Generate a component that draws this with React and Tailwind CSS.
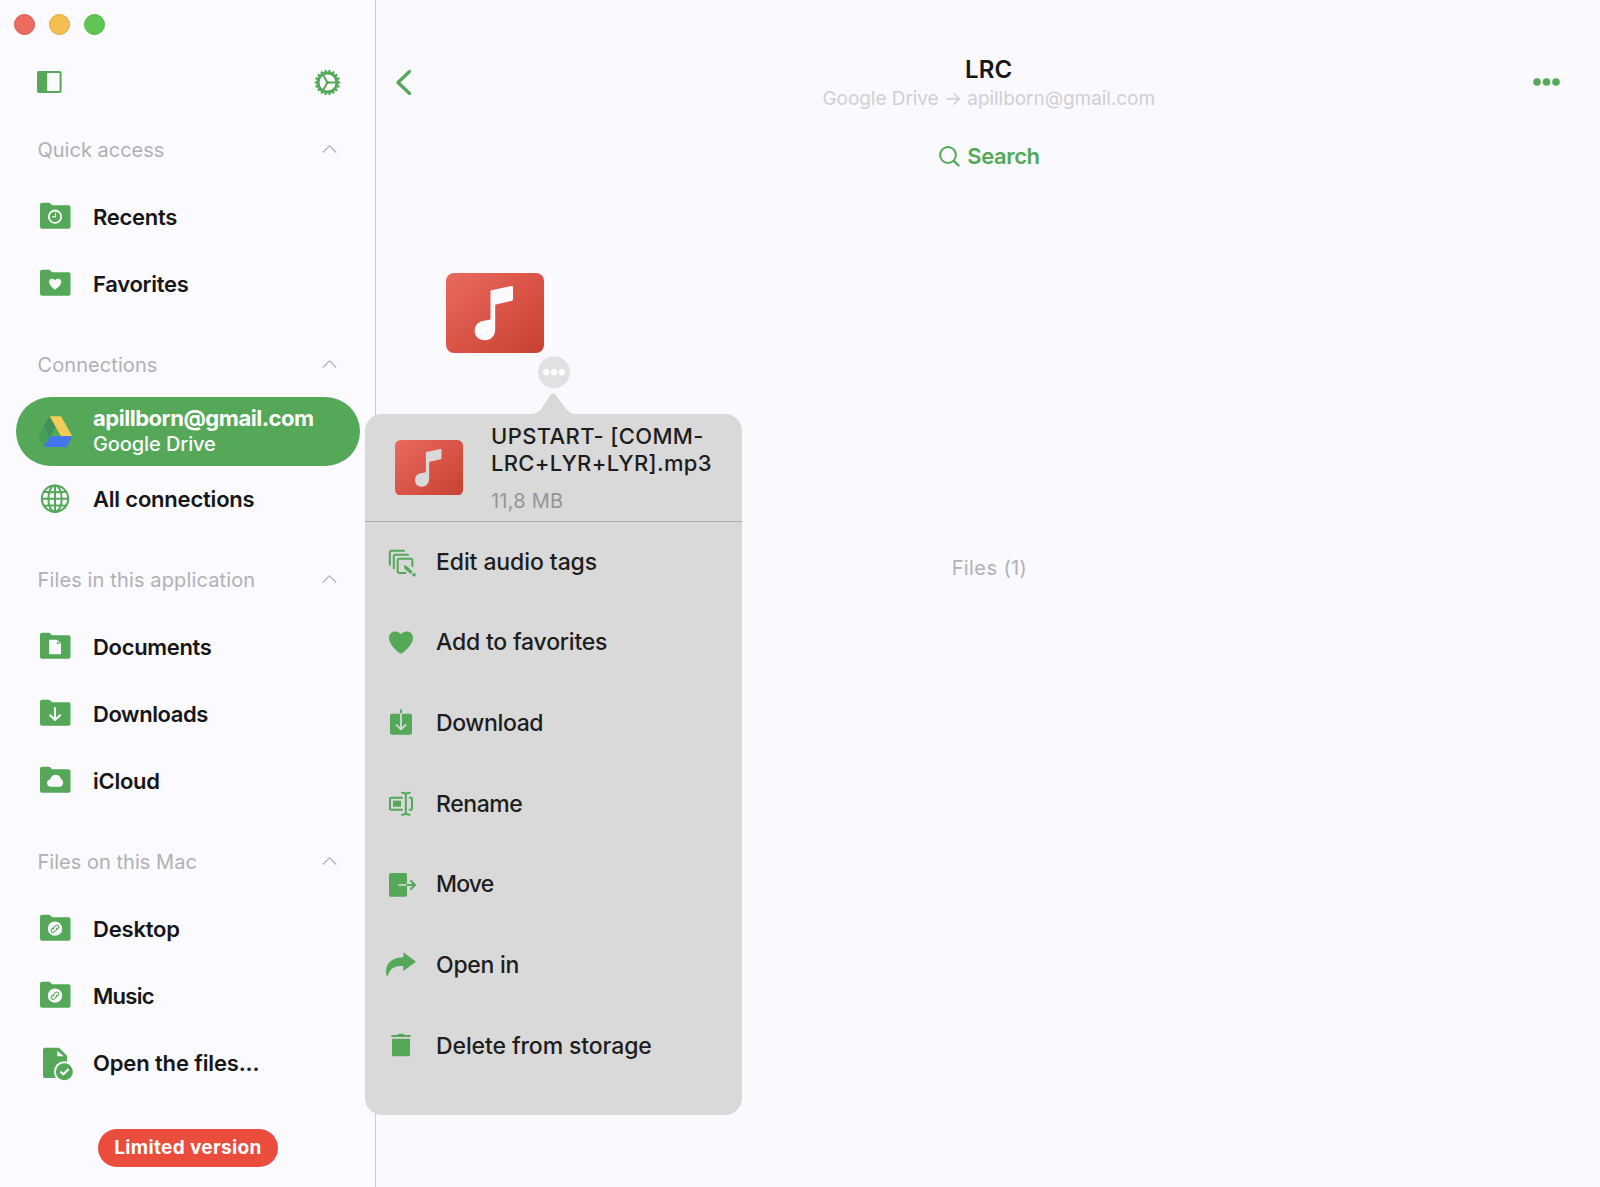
import React, { useId } from "react";

const GREEN = "#54a858";

/* ---------- sidebar icons (shared 108-unit canvas, vertically centred on 0) ---------- */

function SideIcon({ children }) {
  return (
    <svg className="h-9 w-9 shrink-0" viewBox="114 -54 108 108" fill="none">
      {children}
    </svg>
  );
}

function Folder({ children }) {
  return (
    <SideIcon>
      <path d="M120 -37q0 -6 6 -6h20q3 0 4.500 2l4 4.500q1 1 3 1h48q6 0 6 6V29q0 6 -6 6h-79.500q-6 0 -6 -6z" fill={GREEN} />
      {children}
    </SideIcon>
  );
}

const RecentsIcon = () => (
  <Folder>
    <circle cx="165" cy="-1" r="18.500" stroke="#fafaff" strokeWidth="5.500" />
    <path d="M166.500 -12V-0.500H157" stroke="#fafaff" strokeWidth="3.500" strokeLinecap="round" strokeLinejoin="round" />
  </Folder>
);

const FavoritesIcon = () => (
  <Folder>
    <path
      d="M165 17C154 9 147 2 147 -6.500C147 -12 151 -15.500 156 -15.500C160 -15.500 163.500 -13.500 165 -10C166.500 -13.500 170 -15.500 174.500 -15.500C180 -15.500 184 -12 184 -6.500C184 2 176 9 165 17Z"
      fill="#fafaff"
    />
  </Folder>
);

const DocumentsIcon = () => (
  <Folder>
    <path d="M150 -22H171L183 -10V19q0 3 -3 3H150q-3 0 -3 -3V-19q0 -3 3 -3Z" fill="#fafaff" />
    <path d="M171 -17V-9H179Z" fill={GREEN} />
  </Folder>
);

const DownloadsIcon = () => (
  <Folder>
    <path d="M165 -18V17M150.500 4L165 18L180.500 4" stroke="#fafaff" strokeWidth="6" strokeLinecap="round" strokeLinejoin="round" />
  </Folder>
);

const CloudIcon = () => (
  <Folder>
    <path
      d="M153 17C146 17 141 12.500 141 6.500C141 0 146 -4 151 -5C152 -13 159 -19 167 -19C175 -19 181 -14 183 -6C187 -4 189.500 0 189.500 5C189.500 12 185 17 178 17Z"
      fill="#fafaff"
    />
  </Folder>
);

const LinkIcon = () => (
  <Folder>
    <circle cx="165" cy="-1" r="21.500" fill="#fafaff" />
    <g transform="translate(165 -1) rotate(-38)" stroke={GREEN} strokeWidth="3.200" strokeLinecap="round">
      <path d="M-3 -5H-8a5.500 5.500 0 0 0 0 11H-1a5.500 5.500 0 0 0 5 -5" />
      <path d="M3 5H8a5.500 5.500 0 0 0 0 -11H1a5.500 5.500 0 0 0 -5 5" />
    </g>
  </Folder>
);

const OpenFilesIcon = () => (
  <SideIcon>
    <path d="M135 -46H177L201 -22V45H135q-6 0 -6 -6V-40q0 -6 6 -6Z" fill={GREEN} />
    <path d="M172 -37V-20H191Z" fill="#fafaff" />
    <circle cx="193" cy="26" r="31" fill="#fafaff" />
    <circle cx="193" cy="26" r="25.500" fill={GREEN} />
    <path d="M181 26L190 34L206 18" stroke="#fafaff" strokeWidth="6.500" />
  </SideIcon>
);

const GlobeIcon = () => (
  <SideIcon>
    <g stroke={GREEN} strokeWidth="6">
      <circle cx="165" cy="-1" r="39.500" />
      <ellipse cx="165" cy="-1" rx="20" ry="39.500" />
      <path d="M165 -41V39M125 -1H205M131 -22Q165 -19 199 -22M131 20Q165 17 199 20" />
    </g>
  </SideIcon>
);

const DriveIcon = () => (
  <SideIcon>
    <path d="M149 -47L167 -15L132 45L114 13Z" fill="#469f5b" />
    <path d="M149 -47L167 -15L150 13H146L131 -15Z" fill="#3c925a" />
    <path d="M149 -47H183L217 13H183Z" fill="#f3cc58" />
    <path d="M150 13H217L200 45H132Z" fill="#4474ee" />
  </SideIcon>
);

/* ---------- menu icons (90-unit canvas, vertically centred on 0) ---------- */

function MenuIcon({ children }) {
  return (
    <svg className="h-[30px] w-[30px] shrink-0" viewBox="78 -45 90 90" fill="none">
      {children}
    </svg>
  );
}

const EditTagsIcon = () => (
  <MenuIcon>
    <g stroke={GREEN} strokeWidth="6" strokeLinecap="round" strokeLinejoin="round">
      <path d="M89.500 8V-29q0 -5 5 -5H132" />
      <path d="M101.500 19V-17q0 -5 5 -5H144" />
      <path d="M157 12V-5q0 -5 -5 -5H118q-5 0 -5 5V28q0 5 5 5H136" />
    </g>
    <path d="M131 9L140 12L158 29L152 36L134 20Z" fill={GREEN} />
    <circle cx="162" cy="38.500" r="5.500" fill={GREEN} />
  </MenuIcon>
);

const HeartIcon = () => (
  <MenuIcon>
    <path
      d="M123 32C118 32 87 6 87 -15C87 -27 95 -34.500 105 -34.500C113 -34.500 119.500 -31 123 -26C126.500 -31 133 -34.500 141 -34.500C151 -34.500 159 -27 159 -15C159 6 128 32 123 32Z"
      fill={GREEN}
    />
  </MenuIcon>
);

const DownloadIcon = () => (
  <MenuIcon>
    <rect x="90" y="-28" width="66" height="63" rx="5" fill={GREEN} />
    <path d="M123 -38V-28" stroke={GREEN} strokeWidth="6" strokeLinecap="round" />
    <path d="M123 -28V17M109.500 6L123 19L137 6" stroke="#d9dcd9" strokeWidth="5.200" strokeLinecap="round" strokeLinejoin="round" />
  </MenuIcon>
);

const RenameIcon = () => (
  <MenuIcon>
    <g stroke={GREEN} strokeWidth="6" strokeLinecap="round" strokeLinejoin="round">
      <path d="M126 -19H93q-3 0 -3 3V14q0 3 3 3H126" />
      <path d="M149 -19H153q3 0 3 3V14q0 3 -3 3H149" />
      <path d="M126 -34Q136 -34 137.500 -29Q139 -34 149 -34M137.500 -29V27M126 32Q136 32 137.500 27Q139 32 149 32" />
    </g>
    <rect x="99" y="-10" width="24" height="18" fill={GREEN} />
  </MenuIcon>
);

const MoveIcon = () => (
  <MenuIcon>
    <rect x="87" y="-36" width="54" height="71" rx="5" fill={GREEN} />
    <path d="M117 0H142" stroke="#d9dcd9" strokeWidth="5.200" strokeLinecap="round" />
    <path d="M142 0H164M153 -12L165 0L153 12" stroke={GREEN} strokeWidth="6" strokeLinecap="round" strokeLinejoin="round" />
  </MenuIcon>
);

const ShareIcon = () => (
  <MenuIcon>
    <path d="M130 -38L168 -10L130 18V3C105 2 90 8 83 34C79 32 78 26 78 18C80 -8 98 -22 130 -23Z" fill={GREEN} />
  </MenuIcon>
);

const TrashIcon = () => (
  <MenuIcon>
    <path d="M113 -33q1 -4 5 -4H128q4 0 5 4H152V-27H94V-33Z" fill={GREEN} />
    <path d="M96 -22H150V26q0 5 -5 5H101q-5 0 -5 -5Z" fill={GREEN} />
  </MenuIcon>
);

/* ---------- other drawings ---------- */

function ChevronUp() {
  return (
    <svg className="h-[9px] w-[15px]" viewBox="0 0 15 9" fill="none">
      <path d="M0.800 7.500L7.500 0.900L14.200 7.500" stroke="#b4b4b8" strokeWidth="1.300" />
    </svg>
  );
}

function SidebarToggle() {
  return (
    <svg className="h-[22px] w-[25px]" viewBox="0 0 25 22" fill="none">
      <rect x="1" y="1" width="22.600" height="20" rx="1.200" stroke={GREEN} strokeWidth="2" />
      <rect x="0.500" y="0.500" width="9.700" height="21" rx="1" fill={GREEN} />
    </svg>
  );
}

const TEETH = Array.from({ length: 18 }, (_, i) => i * 20);

function Gear() {
  return (
    <svg className="h-[27px] w-[27px]" viewBox="-13.500 -13.500 27 27" fill="none" stroke={GREEN}>
      <circle r="9.500" strokeWidth="3" />
      {TEETH.map((a) => (
        <path key={a} d="M0 -10.500V-12.700" strokeWidth="2.200" transform={`rotate(${a + 10})`} />
      ))}
      <path d="M0 0H9M0 0L-4.600 -8M0 0L-4.600 8" strokeWidth="2" />
      <circle r="1.500" fill={GREEN} stroke="none" />
    </svg>
  );
}

function MusicTile({ className, note }) {
  const id = useId();
  return (
    <svg className={className} viewBox="0 0 98 80">
      <defs>
        <linearGradient id={id} x1="0" y1="0" x2="1" y2="1">
          <stop offset="0" stopColor="#e96a60" />
          <stop offset="0.550" stopColor="#d85245" />
          <stop offset="1" stopColor="#c84232" />
        </linearGradient>
      </defs>
      <rect width="98" height="80" rx="8" fill={`url(#${id})`} />
      <path
        d="M44.500 18.500q0 -1 1 -1.200L65.500 13q1.500 -0.300 1.500 1V26.500q0 1 -1 1.200L50 31.500q-0.800 0.200 -0.800 1V56C49.200 63 45 67.300 39 67.300C32.800 67.300 28.700 63.500 28.700 58C28.700 51.500 33 48.500 39 47.600L43 47q1.500 -0.300 1.500 -1.800Z"
        fill={note}
      />
    </svg>
  );
}

/* ---------- data ---------- */

const SECTIONS = [
  {
    title: "Quick access",
    tracking: "",
    items: [
      { label: "Recents", Icon: RecentsIcon, tracking: "tracking-[-0.27px]" },
      { label: "Favorites", Icon: FavoritesIcon, tracking: "tracking-[-0.28px]" },
    ],
  },
  {
    title: "Connections",
    tracking: "tracking-[0.08px]",
    items: [
      { label: "apillborn@gmail.com", sub: "Google Drive", Icon: DriveIcon, active: true },
      { label: "All connections", Icon: GlobeIcon, tracking: "tracking-[-0.2px]" },
    ],
  },
  {
    title: "Files in this application",
    tracking: "tracking-[0.13px]",
    items: [
      { label: "Documents", Icon: DocumentsIcon, tracking: "tracking-[-0.32px]" },
      { label: "Downloads", Icon: DownloadsIcon, tracking: "tracking-[-0.42px]" },
      { label: "iCloud", Icon: CloudIcon, tracking: "tracking-[-0.25px]" },
    ],
  },
  {
    title: "Files on this Mac",
    tracking: "tracking-[0.03px]",
    items: [
      { label: "Desktop", Icon: LinkIcon, tracking: "tracking-[-0.19px]" },
      { label: "Music", Icon: LinkIcon, tracking: "tracking-[-0.7px]" },
      { label: "Open the files...", Icon: OpenFilesIcon, tracking: "tracking-[-0.15px]" },
    ],
  },
];

const MENU = [
  { label: "Edit audio tags", Icon: EditTagsIcon, tracking: "tracking-[-0.09px]" },
  { label: "Add to favorites", Icon: HeartIcon, tracking: "tracking-[-0.2px]" },
  { label: "Download", Icon: DownloadIcon, tracking: "tracking-[-0.38px]" },
  { label: "Rename", Icon: RenameIcon, tracking: "tracking-[-0.42px]" },
  { label: "Move", Icon: MoveIcon, tracking: "tracking-[-0.85px]" },
  { label: "Open in", Icon: ShareIcon, tracking: "tracking-[-0.25px]" },
  { label: "Delete from storage", Icon: TrashIcon, tracking: "tracking-[-0.11px]" },
];

/* ---------- layout ---------- */

function SideItem({ label, sub, Icon, active, tracking }) {
  if (active) {
    return (
      <li className="flex h-[67.2px] items-center px-4">
        <div className="flex h-[68.5px] w-[344px] shrink-0 items-center gap-[19px] rounded-full bg-[#54a858] pl-[22px] text-white">
          <Icon />
          <div className="pb-px leading-[26px] whitespace-nowrap">
            <div className="text-[22px] font-bold tracking-[-0.47px]">{label}</div>
            <div className="text-[20px] font-medium tracking-[-0.1px]">{sub}</div>
          </div>
        </div>
      </li>
    );
  }
  return (
    <li className="flex h-[67.2px] items-center gap-[19px] pl-[38px]">
      <Icon />
      <span className={`pt-px text-[22px] font-semibold whitespace-nowrap text-[#161618] ${tracking}`}>{label}</span>
    </li>
  );
}

function Sidebar() {
  return (
    <aside className="flex w-[376px] shrink-0 flex-col border-r border-[#cdcdd1] bg-[#fafaff]">
      <div className="flex h-12 items-center gap-3.5 pl-3.5">
        <span className="h-[21px] w-[21px] rounded-full border border-[#d9584d] bg-[#ec6a5e]" />
        <span className="h-[21px] w-[21px] rounded-full border border-[#dfa942] bg-[#f4bf4f]" />
        <span className="h-[21px] w-[21px] rounded-full border border-[#55b544] bg-[#61c554]" />
      </div>
      <div className="flex h-[68px] items-center justify-between pr-[34px] pl-[36.500px]">
        <SidebarToggle />
        <Gear />
      </div>
      <nav className="flex flex-col gap-[13.4px]">
        {SECTIONS.map((s) => (
          <section key={s.title}>
            <div className="flex h-[67.2px] items-center justify-between pr-[38.5px] pl-[37.5px]">
              <h2 className={`text-[20px] whitespace-nowrap text-[#b1b1b4] ${s.tracking}`}>{s.title}</h2>
              <ChevronUp />
            </div>
            <ul>
              {s.items.map((it) => (
                <SideItem key={it.label} {...it} />
              ))}
            </ul>
          </section>
        ))}
      </nav>
      <button className="mt-8 flex h-[38px] w-[180px] items-center justify-center self-center rounded-full bg-[#eb4d3d] pt-px pl-px text-[19px] font-bold tracking-[0.35px] whitespace-nowrap text-white">
        Limited version
      </button>
    </aside>
  );
}

function Popover() {
  return (
    <div className="absolute top-[413.7px] left-[365px] flex h-[701px] w-[376.5px] flex-col rounded-[17px] bg-[#d9d9d9]">
      <svg className="absolute top-[-21px] left-[163px] h-[22px] w-[50px]" viewBox="505 428 150 66">
        <path d="M505 494V492C525 492 535 486 545 476L572 434Q580 423 588 434L615 470C628 486 638 492 655 492V494Z" fill="#d9d9d9" />
      </svg>
      <div className="flex h-[108px] items-start border-b border-[#adadad] pl-[30px]">
        <MusicTile className="mt-[26px] h-[55.5px] w-[68px] shrink-0" note="#d9d9d9" />
        <div className="pt-[9.5px] pl-[28px] whitespace-nowrap">
          <div className="text-[22px] leading-[26.7px] font-medium text-[#1d1d1e]">
            <div className="tracking-[0.37px]">UPSTART- [COMM-</div>
            <div className="tracking-[0.32px]">LRC+LYR+LYR].mp3</div>
          </div>
          <div className="mt-[11px] text-[20px] leading-[26px] tracking-[0.23px] text-[#959597]">11,8 MB</div>
        </div>
      </div>
      <ul>
        {MENU.map(({ label, Icon, tracking }) => (
          <li key={label} className="flex h-[80.65px] items-center gap-5 pl-[21px]">
            <Icon />
            <span className={`text-[23px] font-medium whitespace-nowrap text-[#1d1d1e] ${tracking}`}>{label}</span>
          </li>
        ))}
      </ul>
    </div>
  );
}

function Main() {
  return (
    <main className="flex min-w-0 flex-1 flex-col bg-[#f9f9fe]">
      <header className="flex h-[112px] items-start justify-between pr-10 pl-[18.5px]">
        <svg className="mt-[69px] h-[26px] w-[17px]" viewBox="0 0 17 26" fill="none">
          <path d="M14.500 2.500L3 13.500L14.500 24.500" stroke={GREEN} strokeWidth="3.200" strokeLinecap="round" strokeLinejoin="round" />
        </svg>
        <div className="ml-[33px] pt-[55px] text-center whitespace-nowrap">
          <h1 className="text-[24px] leading-[30px] font-semibold tracking-[0.2px] text-[#161618]">LRC</h1>
          <p className="text-[19px] leading-7 tracking-[-0.05px] text-[#d0d0d3]">Google Drive → apillborn@gmail.com</p>
        </div>
        <svg className="mt-[78px] h-2 w-[27px]" viewBox="0 0 27 8" fill={GREEN}>
          <circle cx="4" cy="4" r="3.800" />
          <circle cx="13.500" cy="4" r="3.800" />
          <circle cx="23" cy="4" r="3.800" />
        </svg>
      </header>
      <button className="mt-[25px] ml-[3px] flex h-[37px] items-center gap-[7px] self-center pt-px text-[22px] font-semibold tracking-[-0.39px] text-[#54a858]">
        <svg className="h-[21px] w-[21px]" viewBox="0 0 21 21" fill="none" stroke={GREEN} strokeLinecap="round">
          <circle cx="9" cy="9" r="7.900" strokeWidth="2" />
          <path d="M14.800 14.800L19.500 19.500" strokeWidth="2.400" />
        </svg>
        Search
      </button>
      <div className="h-[379px] pt-[99px] pl-[70px]">
        <div className="relative w-[98px]">
          <MusicTile className="h-[80px] w-[98px]" note="#fafaff" />
          <svg className="absolute top-[83px] left-[92px] h-[33px] w-[33px]" viewBox="0 0 33 33">
            <circle cx="16" cy="16.300" r="16" fill="#e1e1e3" />
            <g fill="#ffffff">
              <circle cx="8.300" cy="16.300" r="3.200" />
              <circle cx="16" cy="16.300" r="3.200" />
              <circle cx="23.700" cy="16.300" r="3.200" />
            </g>
          </svg>
        </div>
      </div>
      <p className="ml-[3px] self-center text-[20px] leading-[30px] tracking-[0.4px] text-[#b1b1b4]">Files (1)</p>
    </main>
  );
}

export default function App() {
  return (
    <div className="relative flex h-[1187px] w-[1600px] overflow-hidden font-['Inter',sans-serif]">
      <Sidebar />
      <Main />
      <Popover />
    </div>
  );
}
